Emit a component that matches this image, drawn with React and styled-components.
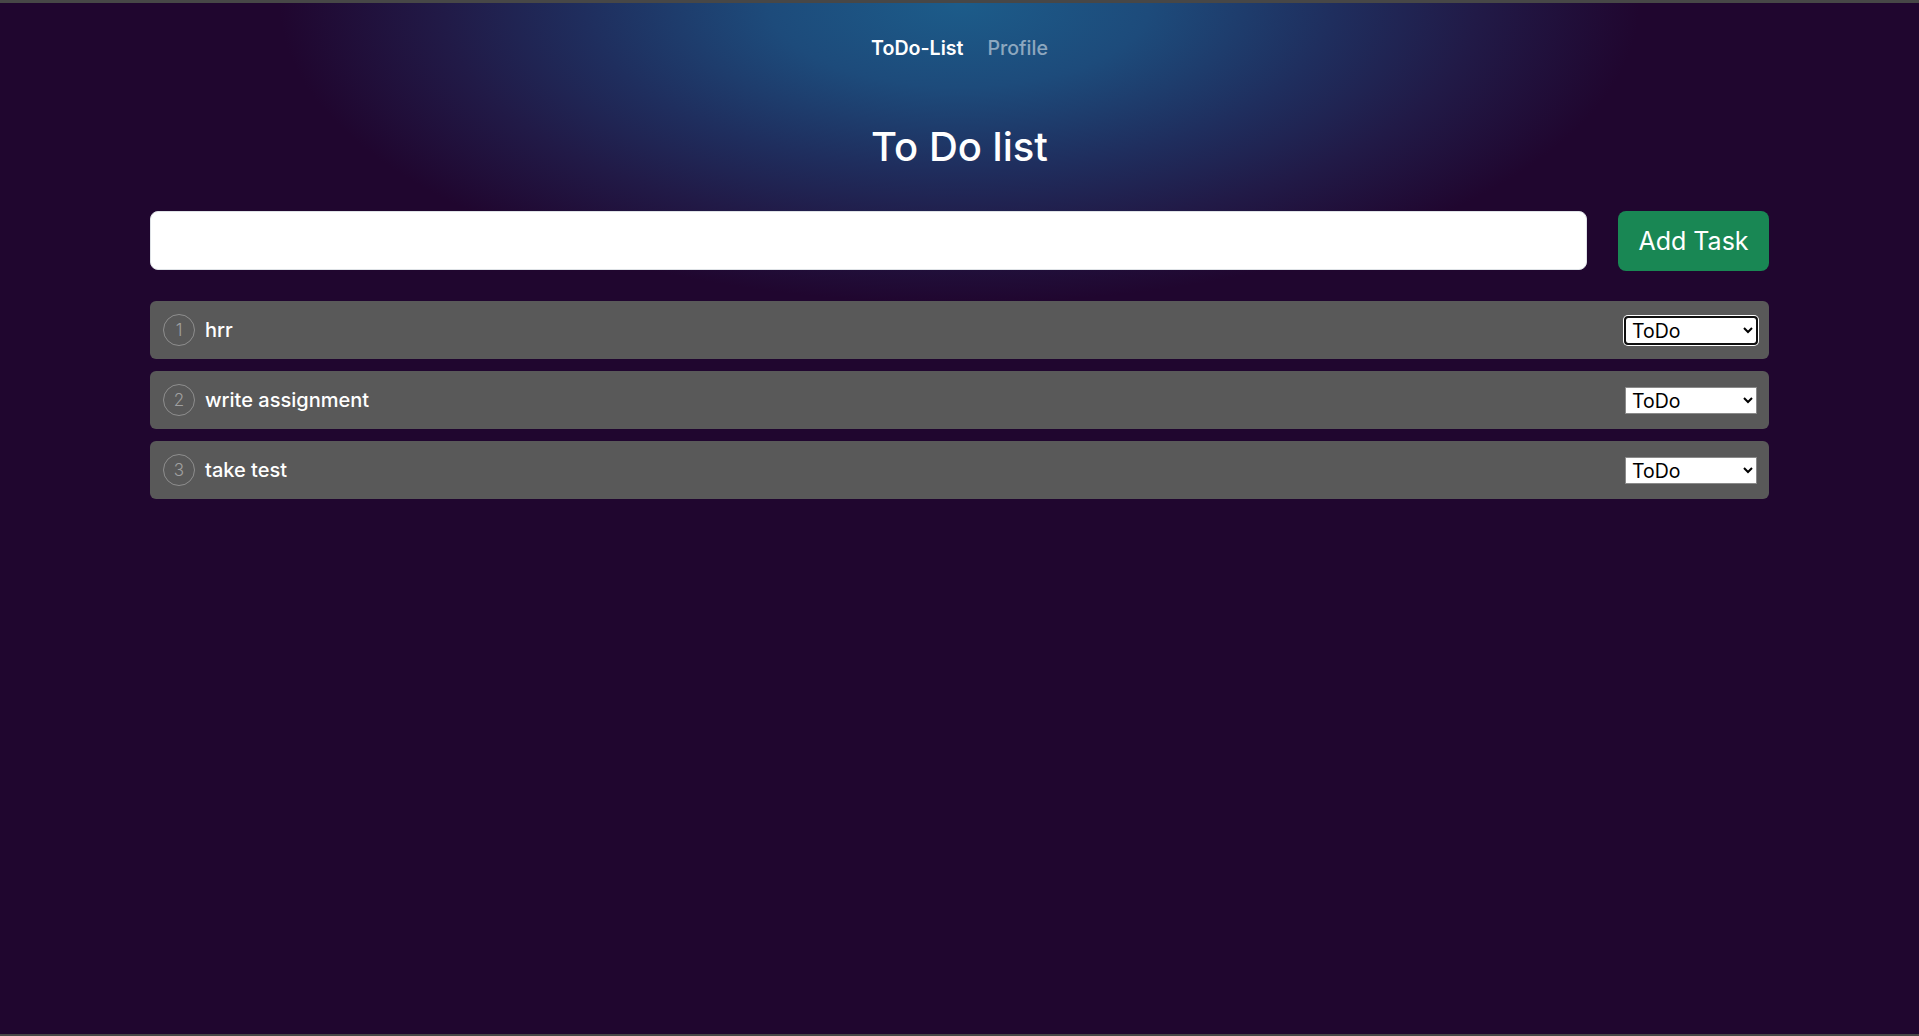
import React from 'react'
import styled, { createGlobalStyle } from 'styled-components'

const GlobalStyle = createGlobalStyle`
  *, *::before, *::after { box-sizing: border-box; }
  body {
    margin: 0;
    font-family: Inter, "Noto Sans", sans-serif;
    background: #20062f;
  }
`

const Page = styled.div`
  min-height: 100vh;
  border-top: 3px solid #474747;
  border-bottom: 2px solid #474747;
  background:
    radial-gradient(ellipse 680px 300px at 50% 0%, #1c5c8a 0%, #1d4b7b 28%, #1f2e5e 55%, #211a47 76%, rgba(32, 6, 47, 0) 100%),
    #20062f;
`

const Nav = styled.nav`
  display: flex;
  justify-content: center;
  padding-top: 23px;
`

const NavLink = styled.a`
  padding: 8px 12px;
  font-size: 19.6px;
  line-height: 28px;
  font-weight: ${p => (p.$active ? 600 : 500)};
  color: ${p => (p.$active ? '#ffffff' : 'rgba(255, 255, 255, 0.5)')};
  text-decoration: none;
  cursor: pointer;
`

const Title = styled.h1`
  margin: 53px 0 0;
  text-align: center;
  font-size: 40px;
  line-height: 48px;
  font-weight: 500;
  color: #fff;
`

const Container = styled.main`
  margin: 0 150px;
`

const AddRow = styled.div`
  display: flex;
  gap: 31px;
  margin-top: 40px;
`

const TaskInput = styled.input`
  flex: 1;
  height: 59px;
  border: 1px solid #dee2e6;
  border-radius: 8px;
  background: #fff;
  padding: 0 16px;
  font-family: inherit;
  font-size: 20px;
  outline: none;
`

const AddButton = styled.button`
  width: 151px;
  height: 60px;
  border: none;
  border-radius: 8px;
  background: #198754;
  color: #fff;
  font-family: inherit;
  font-size: 25px;
  font-weight: 400;
  cursor: pointer;
`

const TaskList = styled.ul`
  list-style: none;
  margin: 30px 0 0;
  padding: 0;
  display: flex;
  flex-direction: column;
  gap: 12px;
`

const TaskRow = styled.li`
  display: flex;
  align-items: center;
  height: 58px;
  padding: 0 12px 0 13px;
  border-radius: 6px;
  background: #595959;
`

const Num = styled.span`
  display: flex;
  align-items: center;
  justify-content: center;
  width: 32px;
  height: 32px;
  border: 1px solid #8e8e8e;
  border-radius: 50%;
  color: #a0a0a0;
  font-size: 17px;
  font-weight: 300;
`

const TaskText = styled.span`
  flex: 1;
  margin-left: 10px;
  color: #fff;
  font-size: 20px;
  font-weight: 450;
`

const StatusSelect = styled.select`
  width: 132px;
  height: 27px;
  padding: 0 2px;
  background: #fff;
  color: #000;
  border: 1px solid #8a8a8a;
  border-radius: ${p => (p.$focused ? '3px' : '0')};
  font-family: inherit;
  font-size: 19.5px;
  outline: ${p => (p.$focused ? '2px solid #101010' : 'none')};
  outline-offset: -1px;
  box-shadow: ${p => (p.$focused ? '0 0 0 2px #fff' : 'none')};
`

const tasks = ['hrr', 'write assignment', 'take test']

export default function App() {
  return (
    <Page>
      <GlobalStyle />
      <Nav>
        <NavLink $active>ToDo-List</NavLink>
        <NavLink>Profile</NavLink>
      </Nav>
      <Title>To Do list</Title>
      <Container>
        <AddRow>
          <TaskInput type="text" />
          <AddButton>Add Task</AddButton>
        </AddRow>
        <TaskList>
          {tasks.map((t, i) => (
            <TaskRow key={t}>
              <Num>{i + 1}</Num>
              <TaskText>{t}</TaskText>
              <StatusSelect defaultValue="ToDo" $focused={i === 0}>
                <option>ToDo</option>
                <option>In Progress</option>
                <option>Done</option>
              </StatusSelect>
            </TaskRow>
          ))}
        </TaskList>
      </Container>
    </Page>
  )
}
